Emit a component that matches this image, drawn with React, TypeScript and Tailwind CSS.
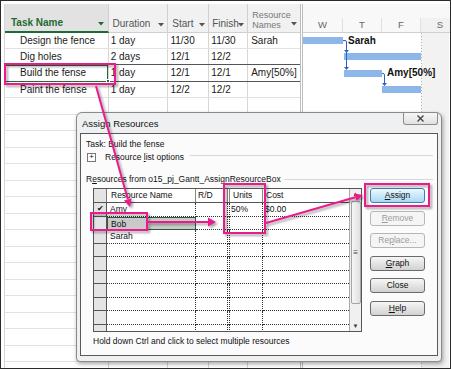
import React from "react";

const tasks = [
  { name: "Design the fence", dur: "1 day", start: "11/30", finish: "11/30", res: "Sarah", h: "h-[16px]" },
  { name: "Dig holes", dur: "2 days", start: "12/1", finish: "12/2", res: "", h: "h-[16px]" },
  { name: "Build the fense", dur: "1 day", start: "12/1", finish: "12/1", res: "Amy[50%]", h: "h-[17px]" },
  { name: "Paint the fense", dur: "1 day", start: "12/2", finish: "12/2", res: "", h: "h-[16px]" },
];

const resources = [
  { name: "Amy", units: "50%", cost: "$0.00", check: true },
  { name: "Bob", units: "", cost: "", check: false },
  { name: "Sarah", units: "", cost: "", check: false },
  ...Array.from({ length: 7 }, () => ({ name: "", units: "", cost: "", check: false })),
];

const Tri = ({ color = "#555" }: { color?: string }) => (
  <svg width="6" height="4" viewBox="0 0 6 4" className="shrink-0 mb-[4px]">
    <path d="M0 0 H6 L3 3.5 Z" fill={color} />
  </svg>
);

const HeadCell = ({ label, w, pl }: { label: string; w: string; pl: string }) => (
  <div className={`${w} ${pl} h-full flex items-end pr-[3px] pb-[1px] bg-[#f1f1f1] border-r border-b border-[#d0d0d0]`}>
    <span className="flex-1 min-w-0 whitespace-nowrap text-[10px] leading-[14px] text-[#555]">{label}</span>
    <Tri />
  </div>
);

const Btn = ({ children, kind }: { children: React.ReactNode; kind: "primary" | "normal" | "disabled" }) => {
  const styles = {
    primary: "border-[#3c7fb1] bg-linear-to-b from-[#eef8fe] to-[#a8d9f4] text-[#111]",
    normal: "border-[#6a6a6a] bg-linear-to-b from-[#f6f6f6] to-[#d2d2d2] text-[#111]",
    disabled: "border-[#b4b8bb] bg-[#f5f5f5] text-[#9c9c9c]",
  };
  return (
    <div className={`h-[15px] w-[55px] rounded-[3px] border flex items-center justify-center text-[8.5px] leading-none ${styles[kind]}`}>
      {children}
    </div>
  );
};

const Gantt = () => (
  <svg width="146" height="336" className="block">
    <rect x="118" y="0" width="28" height="336" fill="#f2f2f2" />
    <line x1="118.5" y1="0" x2="118.5" y2="336" stroke="#b5b5b5" strokeDasharray="1 2" />
    {/* bars */}
    <rect x="0" y="4" width="40" height="7" fill="#8db6ea" />
    <rect x="41" y="20" width="77" height="7" fill="#8db6ea" />
    <rect x="41" y="37" width="38" height="7" fill="#8db6ea" />
    <rect x="79" y="53" width="39" height="7" fill="#8db6ea" />
    {/* links */}
    <path d="M40 7.5 H42 Q43.5 7.5 43.5 9 V35" stroke="#2a62c4" strokeWidth="1" fill="none" />
    <path d="M41 17 H46 L43.5 20 Z" fill="#2a62c4" />
    <path d="M41 34 H46 L43.5 37 Z" fill="#2a62c4" />
    <path d="M79 40.5 H80 Q81.5 40.5 81.5 42 V51" stroke="#2a62c4" strokeWidth="1" fill="none" />
    <path d="M79 50 H84 L81.5 53 Z" fill="#2a62c4" />
    <text x="45" y="11" fontSize="10" fontWeight="700" fill="#111" fontFamily="Liberation Sans, Arial, sans-serif">Sarah</text>
    <text x="84" y="43" fontSize="10" fontWeight="700" fill="#111" fontFamily="Liberation Sans, Arial, sans-serif">Amy[50%]</text>
  </svg>
);

const Annotations = () => (
  <svg width="451" height="369" className="absolute left-0 top-0 pointer-events-none drop-shadow-[2px_2px_1px_rgba(0,0,0,0.35)]">
    <g stroke="#ec1b8c" strokeWidth="2" fill="none">
      <rect x="5" y="64" width="110" height="20" />
      <rect x="91" y="213" width="56" height="17" />
      <rect x="224" y="184" width="41" height="49" />
      <rect x="365" y="184" width="64" height="22" />
      <line x1="96" y1="86" x2="127.8" y2="199.3" />
      <line x1="148" y1="222" x2="208" y2="222" />
      <line x1="266" y1="223" x2="355.3" y2="197.2" />
    </g>
    <g fill="#ec1b8c">
      <polygon points="130,207 131.7,198.2 123.9,200.4" />
      <polygon points="216,222 208,217.5 208,226.5" />
      <polygon points="363,195 356.4,201 354.2,193.4" />
    </g>
  </svg>
);

const ResourceGrid = () => (
  <div className="w-[269px] h-[144px] border border-[#555] bg-white flex overflow-hidden">
    <div className="flex-1 flex flex-col overflow-hidden">
      {/* header */}
      <div className="flex h-[14px] shrink-0 border-b border-[#555] text-[8.5px] leading-[13px] text-[#111]">
        <div className="w-[13px] bg-[#e4e4e4] border-r border-[#777]" />
        <div className="w-[89px] pl-[4px] border-r border-[#888]">Resource Name</div>
        <div className="w-[32px] pl-[2px] border-r border-[#888]">R/D</div>
        <div className="w-[2px] border-r border-[#888]" />
        <div className="w-[33px] pl-[3px] border-r border-[#888]">Units</div>
        <div className="flex-1 pl-[3px]">Cost</div>
      </div>
      {resources.map((r, i) => (
        <div key={i} className="flex h-[13.5px] shrink-0 text-[8.5px] leading-[12px] text-[#111]">
          <div className="w-[13px] bg-[#e4e4e4] border-r border-b border-[#555] flex items-center justify-center text-[8px]">
            {r.check ? "✔" : ""}
          </div>
          <div
            className={`w-[89px] pl-[3px] ${
              r.name === "Bob"
                ? "bg-[#c9c9c9] border border-[#2f5a34]"
                : "border-r border-b border-dotted border-[#333]"
            }`}
          >
            {r.name}
          </div>
          <div className="w-[32px] border-r border-b border-dotted border-[#333]" />
          <div className="w-[2px] border-r border-b border-dotted border-[#333]" />
          <div className="w-[33px] pl-[1px] border-r border-b border-dotted border-[#333]">{r.units}</div>
          <div className="flex-1 pl-[2px] border-b border-dotted border-[#333]">{r.cost}</div>
        </div>
      ))}
    </div>
    {/* scrollbar */}
    <div className="w-[12px] bg-[#f0f0f0] border-l border-[#aaa] flex flex-col items-center">
      <span className="text-[6px] leading-[10px] text-[#333]">▲</span>
      <div className="w-[10px] mt-[2px] h-[103px] rounded-[2px] border border-[#a5a5a5] bg-linear-to-r from-[#f6f6f6] to-[#e0e0e0] flex items-center justify-center">
        <span className="text-[8px] leading-none text-[#444]">≡</span>
      </div>
      <span className="mt-auto text-[6px] leading-[10px] text-[#333]">▼</span>
    </div>
  </div>
);

const Dialog = () => (
  <div className="absolute left-[76px] top-[112px] w-[366px] h-[250px] rounded-t-[6px] rounded-b-[4px] border border-[#8a8a8a] bg-[#eef0f2] shadow-[1px_2px_4px_rgba(0,0,0,0.35)] flex flex-col font-['Liberation_Sans',Arial,sans-serif]">
    <div className="h-[20px] flex items-start">
      <span className="pl-[5px] pt-[5px] text-[9.5px] leading-[11px] text-[#111]">Assign Resources</span>
      <div className="ml-auto mr-[3px] w-[35px] h-[12px] rounded-b-[3px] border border-t-0 border-[#8d8d8d] bg-linear-to-b from-[#f6f6f6] to-[#e2e2e2] flex items-center justify-center">
        <svg width="7" height="7" viewBox="0 0 7 7">
          <path d="M0.5 0.5 L6.5 6.5 M6.5 0.5 L0.5 6.5" stroke="#444" strokeWidth="1.4" />
        </svg>
      </div>
    </div>
    <div className="mx-[3px] mb-[5px] flex-1 border border-[#5a5a5a] bg-[#fbfbfb] pl-[5px] pr-[4px] flex flex-col text-[8.5px] text-[#111]">
      <div className="mt-[5px] h-[11px] leading-[11px]">Task: Build the fense</div>
      <div className="mt-[2px] h-[10px] flex items-center">
        <div className="ml-[1px] w-[9px] h-[9px] border border-[#777] bg-white flex items-center justify-center text-[8px] leading-none">+</div>
        <span className="ml-[9px] leading-[10px]">
          Resource <span className="underline">l</span>ist options
        </span>
        <div className="flex-1 h-px bg-[#d8d8d8] ml-[6px] self-start mt-[3px]" />
      </div>
      <div className="mt-[12px] h-[11px] flex items-center leading-[11px]">
        <span>
          R<span className="underline">e</span>sources from o15_pj_Gantt_AssignResourceBox
        </span>
        <div className="flex-1 h-px bg-[#d8d8d8] ml-[3px]" />
      </div>
      <div className="mt-[3px] ml-[7px] flex gap-[8px]">
        <ResourceGrid />
        <div className="flex flex-col gap-[7.5px]">
          <Btn kind="primary">
            <span className="underline">A</span>ssign
          </Btn>
          <Btn kind="disabled">
            <span className="underline">R</span>emove
          </Btn>
          <Btn kind="disabled">
            Re<span className="underline">p</span>lace...
          </Btn>
          <Btn kind="normal">
            <span className="underline">G</span>raph
          </Btn>
          <Btn kind="normal">Close</Btn>
          <Btn kind="normal">
            <span className="underline">H</span>elp
          </Btn>
        </div>
      </div>
      <div className="mt-[4px] ml-[7px] h-[11px] leading-[11px]">Hold down Ctrl and click to select multiple resources</div>
    </div>
  </div>
);

export default function App() {
  const emptyRows = Array.from({ length: 17 });
  return (
    <div className="relative w-[451px] h-[369px] overflow-hidden bg-white font-['Liberation_Sans',Arial,sans-serif]">
      <div className="flex h-full pl-[4px] pt-[4px]">
        {/* task table */}
        <div className="w-[296px] flex flex-col border-l border-[#d6d6d6]">
          <div className="flex h-[29px] shrink-0">
            <div className="w-[104px] h-full flex items-end pl-[6px] pr-[4px] pb-[1px] bg-[#e2e2e2] border-r border-[#d0d0d0] border-b-2 border-b-[#1f6b34]">
              <span className="flex-1 text-[10px] leading-[14px] font-bold text-[#1f6b34]">Task Name</span>
              <Tri color="#1f6b34" />
            </div>
            <HeadCell label="Duration" w="w-[60px]" pl="pl-[4px]" />
            <HeadCell label="Start" w="w-[41px]" pl="pl-[4px]" />
            <HeadCell label="Finish" w="w-[39px]" pl="pl-[3px]" />
            <div className="w-[52px] h-full flex items-end pl-[4px] pr-[3px] pb-[2px] bg-[#f1f1f1] border-b border-[#d0d0d0]">
              <span className="flex-1 text-[9px] leading-[10px] text-[#777]">
                Resource
                <br />
                Names
              </span>
              <Tri />
            </div>
          </div>
          {tasks.map((t, i) => {
            const sel = i === 2;
            const dark = i === 1 || i === 2;
            return (
              <div
                key={i}
                className={`flex ${t.h} shrink-0 border-b text-[10px] leading-[15px] text-[#1a1a1a] ${
                  dark ? "border-[#555]" : "border-[#e2e2e2]"
                }`}
              >
                <div className="relative w-[104px] pl-[15px] border-r border-[#d6d6d6] whitespace-nowrap">
                  {t.name}
                  {sel && (
                    <>
                      <div className="absolute inset-x-0 top-0 bottom-[-1px] border border-[#1f6b34]" />
                      <div className="absolute right-[-2px] bottom-[-2px] w-[4px] h-[4px] bg-[#1f6b34] border border-white" />
                    </>
                  )}
                </div>
                <div className="w-[60px] pl-[2px] border-r border-[#d6d6d6]">{t.dur}</div>
                <div className="w-[41px] pl-[2px] border-r border-[#d6d6d6]">{t.start}</div>
                <div className="w-[39px] pl-[2px] border-r border-[#d6d6d6]">{t.finish}</div>
                <div className="w-[52px] pl-[3px] whitespace-nowrap">{t.res}</div>
              </div>
            );
          })}
          {emptyRows.map((_, i) => (
            <div key={i} className="flex h-[16.5px] shrink-0 border-b border-[#e2e2e2]">
              <div className="w-[104px] border-r border-[#d6d6d6]" />
              <div className="w-[60px] border-r border-[#d6d6d6]" />
              <div className="w-[41px] border-r border-[#d6d6d6]" />
              <div className="w-[39px] border-r border-[#d6d6d6]" />
              <div className="w-[52px]" />
            </div>
          ))}
        </div>
        {/* divider */}
        <div className="w-[3px] border-l border-r border-[#bdbdbd]" />
        {/* gantt chart */}
        <div className="flex-1 flex flex-col overflow-hidden">
          <div className="h-[29px] shrink-0 bg-[#f8f8f8] border-b border-[#d0d0d0] flex flex-col">
            <div className="h-[14px]" />
            <div className="flex-1 flex text-[9.5px] leading-[14px] text-[#666]">
              {["W", "T", "F", "S"].map((d, i) => (
                <div
                  key={d}
                  className={`shrink-0 text-center border-r border-[#e0e0e0] ${i === 0 ? "w-[40px]" : "w-[39px]"} ${
                    i === 3 ? "bg-[#f1f1f1]" : ""
                  }`}
                >
                  {d}
                </div>
              ))}
            </div>
          </div>
          <Gantt />
        </div>
      </div>
      <Dialog />
      <Annotations />
      <div className="absolute inset-0 border border-[#2b2b2b] pointer-events-none" />
    </div>
  );
}
